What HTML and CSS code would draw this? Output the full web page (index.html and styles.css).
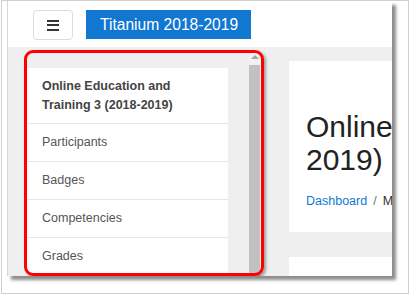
FILE: index.html
```html
<!DOCTYPE html>
<html lang="en">
    <head>
        <meta charset="utf-8">
        <title>Titanium 2018-2019</title>
        <meta name="viewport" content="width=device-width, initial-scale=1.0">
        <link rel="stylesheet" href="styles.css">
    </head>
    <body>
        <div class="frame">
            <div class="shot">
                <header class="navbar">
                    <button class="menu-toggle" aria-label="Toggle menu">
                        <span></span><span></span><span></span>
                    </button>
                    <div class="brand">Titanium 2018-2019</div>
                </header>

                <div class="page">
                    <nav class="drawer">
                        <ul class="drawer-list">
                            <li class="course">Online Education and Training 3 (2018-2019)</li>
                            <li>Participants</li>
                            <li>Badges</li>
                            <li>Competencies</li>
                            <li>Grades</li>
                        </ul>
                    </nav>

                    <div class="scrollbar">
                        <span class="arrow"></span>
                        <span class="thumb"></span>
                    </div>

                    <main class="region">
                        <div class="card page-header">
                            <h1>Online Education and Training 3 (2018-<br>2019)</h1>
                            <ol class="crumbs">
                                <li><a href="#">Dashboard</a></li>
                                <li class="sep">/</li>
                                <li>My courses</li>
                            </ol>
                        </div>
                        <div class="card"></div>
                    </main>
                </div>

                <!-- annotation drawn over the drawer -->
                <div class="callout"></div>
            </div>
        </div>
    </body>
</html>
```

FILE: styles.css
```css
*, *::before, *::after {
    box-sizing: border-box;
}
body, h1, ul, ol {
    margin: 0;
    padding: 0;
}

:root {
    --brand-color: #1177d1;
    --text-color: #555;
    --page-bg: #efefef;
    --line-color: #e6e6e6;
}

body {
    font-family: 'Liberation Sans', Arial, sans-serif;
    background: #fff;
    color: var(--text-color);
}

.frame {
    width: 408px;
    height: 294px;
    margin-left: 1px;
    border: 1px solid #cfcfcf;
    background: #fff;
}

.shot {
    position: relative;
    width: 385px;
    height: 275px;
    margin-left: 5px;
    border-left: 1px solid #d6d6d6;
    background: var(--page-bg);
    box-shadow: 4px 4px 3px rgba(0, 0, 0, 0.45);
    overflow: hidden;
}

/* Navbar */
.navbar {
    display: flex;
    align-items: flex-start;
    gap: 13px;
    height: 46px;
    padding: 9px 0 0 25px;
    background: #fff;
}

.menu-toggle {
    display: flex;
    flex-direction: column;
    justify-content: center;
    gap: 2.5px;
    width: 40px;
    height: 30px;
    padding: 0 13px;
    background: #fff;
    border: 1px solid #dcdcdc;
    border-radius: 4px;
}

.menu-toggle span {
    display: block;
    height: 2px;
    background: #333;
}

.brand {
    width: 165px;
    height: 29px;
    line-height: 29px;
    padding-left: 14px;
    background: var(--brand-color);
    color: #fff;
    font-size: 15.6px;
}

/* Page */
.page {
    display: flex;
    align-items: flex-start;
    height: 229px;
}

.drawer {
    flex: none;
    width: 201px;
    margin: 21px 0 0 19px;
    background: #fff;
}

.drawer-list {
    list-style: none;
}

.drawer-list li {
    padding: 9px 15px;
    line-height: 19px;
    font-size: 12.5px;
    border-top: 1px solid var(--line-color);
}

.drawer-list .course {
    padding-bottom: 8px;
    border-top: none;
    font-weight: bold;
    color: #444;
}

.scrollbar {
    flex: none;
    display: flex;
    flex-direction: column;
    align-items: center;
    width: 14px;
    height: 226px;
    margin: 3px 0 0 21px;
    background: #f1f1f1;
}

.arrow {
    width: 0;
    height: 0;
    margin: 5px 0 6px -3px;
    border-left: 4px solid transparent;
    border-right: 4px solid transparent;
    border-bottom: 4px solid #a3a3a3;
}

.thumb {
    flex: 1;
    align-self: flex-start;
    width: 11px;
    background: #c1c1c1;
}

.region {
    flex: none;
    width: 300px;
    margin: 14px 0 0 26px;
}

.card {
    background: #fff;
    height: 40px;
}

.page-header {
    height: auto;
    padding: 49px 0 21px 17px;
    margin-bottom: 25px;
}

.page-header h1 {
    font-size: 30px;
    line-height: 33px;
    font-weight: normal;
    color: #222;
    white-space: nowrap;
}

.crumbs {
    display: flex;
    gap: 6px;
    margin-top: 16px;
    list-style: none;
    font-size: 12.5px;
    line-height: 19px;
    white-space: nowrap;
    color: #333;
}

.crumbs a {
    color: var(--brand-color);
    text-decoration: none;
}

.crumbs .sep {
    color: #6a737b;
}

/* Red annotation box */
.callout {
    position: absolute;
    left: 16px;
    top: 49px;
    width: 240px;
    height: 226px;
    border: 3px solid #f00;
    border-radius: 9px;
    box-shadow: 2px 2px 3px rgba(0, 0, 0, 0.35);
}
```
